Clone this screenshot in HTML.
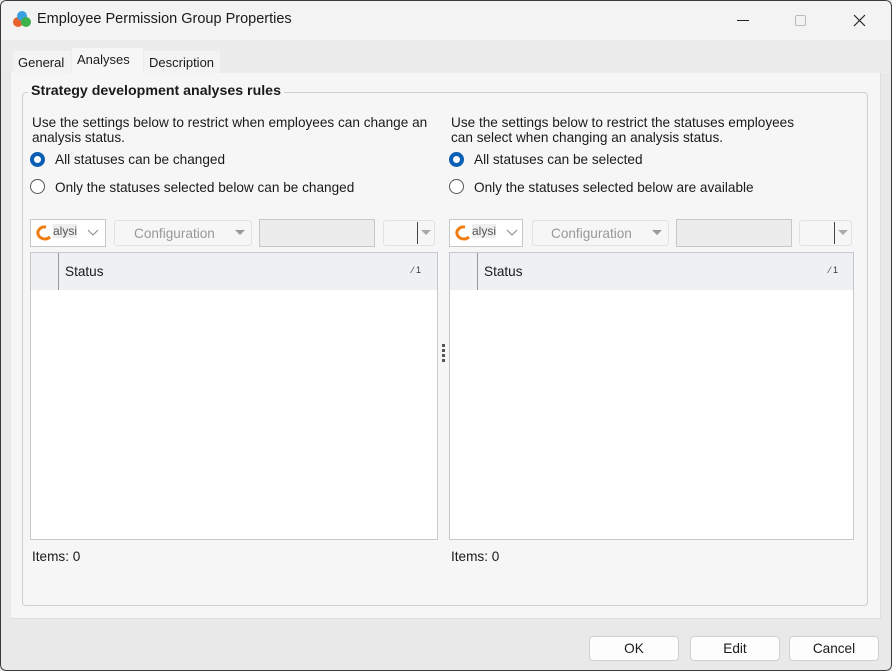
<!DOCTYPE html>
<html><head><meta charset="utf-8"><style>
*{box-sizing:border-box;margin:0;padding:0}
body{width:892px;height:671px;overflow:hidden;font-family:"Liberation Sans",sans-serif;font-size:13.6px;color:#1a1a1a;background:#e9e9e9;position:relative}
.a{position:absolute}
.win{left:0;top:0;width:892px;height:671px;border-radius:6px;background:#e9e9e9;overflow:hidden}
.frame{left:0;top:0;width:892px;height:671px;border:1px solid #3a3a3a;border-radius:6px;z-index:9}
.title{left:0;top:0;width:892px;height:40px;background:#f3f3f3}
.strip{left:0;top:40px;width:892px;height:33px;background:#ececec}
.page{left:11px;top:73px;width:870px;height:546px;background:#f6f6f6;border-right:1px solid #ddd;border-bottom:1px solid #ddd}
.tab{top:51px;height:22px;background:#f3f3f3;padding:4px 5px;font-size:13px}
.group{left:22px;top:92px;width:846px;height:514px;border:1px solid #cfcfcf;border-radius:4px}
.legend{left:28px;top:83px;background:#f6f6f6;font-weight:bold;padding:0 3px;font-size:14.2px}
.radio{width:15px;height:15px;border-radius:50%;border:1px solid #555;background:#fff}
.radio.on{border:4px solid #0a5fb4;background:#fff}
.grid{border:1px solid #c6c8cc;background:#fff}
.hdr{left:0;top:0;right:0;height:37px;background:#eef0f3}
.btn{top:636px;height:25px;background:#fdfdfd;border:1px solid #d0d0d0;border-radius:4px;text-align:center;line-height:23px}
.dd{height:26px;border:1px solid #e2e2e2;border-radius:3px;background:#f6f6f6}
</style></head><body>
<div class="a win">
<div class="a title"></div>
<svg class="a" style="left:12px;top:10px" width="20" height="18" viewBox="0 0 20 18"><circle cx="6" cy="12" r="5" fill="#e8632c"/><circle cx="10" cy="6" r="5" fill="#3aa0e0"/><circle cx="14" cy="12" r="5" fill="#3cb34a"/></svg>
<div class="a" style="left:37px;top:11px;font-size:14.5px">Employee Permission Group Properties</div>
<div class="a" style="left:737px;top:20px;width:12px;height:1px;background:#222"></div>
<div class="a" style="left:795px;top:15px;width:11px;height:11px;border:1px solid #bbb;border-radius:2px"></div>
<svg class="a" style="left:853px;top:14px" width="13" height="13"><path d="M1 1L12 12M12 1L1 12" stroke="#222" stroke-width="1.2"/></svg>
<div class="a strip"></div>
<div class="a tab" style="left:13px;width:58px">General</div>
<div class="a tab" style="left:72px;top:48px;height:26px;width:71px;background:#f6f6f6;padding-top:4px">Analyses</div>
<div class="a tab" style="left:144px;width:76px">Description</div>
<div class="a page"></div>
<div class="a group"></div>
<div class="a legend">Strategy development analyses rules</div>

<div class="a" style="left:32px;top:115px;line-height:15px">Use the settings below to restrict when employees can change an<br>analysis status.</div>
<div class="a radio on" style="left:30px;top:152px"></div>
<div class="a" style="left:55px;top:152px">All statuses can be changed</div>
<div class="a radio" style="left:30px;top:179px"></div>
<div class="a" style="left:55px;top:180px">Only the statuses selected below can be changed</div>

<div class="a" style="left:451px;top:115px;line-height:15px">Use the settings below to restrict the statuses employees<br>can select when changing an analysis status.</div>
<div class="a radio on" style="left:449px;top:152px"></div>
<div class="a" style="left:474px;top:152px">All statuses can be selected</div>
<div class="a radio" style="left:449px;top:179px"></div>
<div class="a" style="left:474px;top:180px">Only the statuses selected below are available</div>

<div class="a" style="left:30px;top:219px;width:76px;height:28px;border:1px solid #c8c8c8;background:#fff"></div>
<svg class="a" style="left:34px;top:224px" width="20" height="18"><path d="M12 3A7 6 0 1 0 16 13" stroke="#f07d12" stroke-width="3" fill="none"/></svg>
<div class="a" style="left:53px;top:224px;color:#555;background:#eee;font-size:12px">alysi</div>
<svg class="a" style="left:87px;top:229px" width="12" height="8"><path d="M1 1L6 6L11 1" stroke="#888" fill="none"/></svg>
<div class="a dd" style="left:114px;top:220px;width:138px"></div>
<div class="a" style="left:134px;top:226px;color:#999">Configuration</div>
<svg class="a" style="left:235px;top:230px" width="10" height="6"><path d="M0 0H10L5 5Z" fill="#999"/></svg>
<div class="a" style="left:259px;top:219px;width:116px;height:28px;border:1px solid #c8c8c8;background:#ececec"></div>
<div class="a dd" style="left:383px;top:220px;width:52px"></div>
<div class="a" style="left:417px;top:222px;width:1px;height:22px;background:#444"></div>
<svg class="a" style="left:421px;top:230px" width="10" height="6"><path d="M0 0H10L5 5Z" fill="#aaa"/></svg>

<div class="a" style="left:449px;top:219px;width:74px;height:28px;border:1px solid #c8c8c8;background:#fff"></div>
<svg class="a" style="left:453px;top:224px" width="20" height="18"><path d="M12 3A7 6 0 1 0 16 13" stroke="#f07d12" stroke-width="3" fill="none"/></svg>
<div class="a" style="left:472px;top:224px;color:#555;background:#eee;font-size:12px">alysi</div>
<svg class="a" style="left:506px;top:229px" width="12" height="8"><path d="M1 1L6 6L11 1" stroke="#888" fill="none"/></svg>
<div class="a dd" style="left:532px;top:220px;width:137px"></div>
<div class="a" style="left:551px;top:226px;color:#999">Configuration</div>
<svg class="a" style="left:652px;top:230px" width="10" height="6"><path d="M0 0H10L5 5Z" fill="#999"/></svg>
<div class="a" style="left:676px;top:219px;width:116px;height:28px;border:1px solid #c8c8c8;background:#ececec"></div>
<div class="a dd" style="left:799px;top:220px;width:53px"></div>
<div class="a" style="left:834px;top:222px;width:1px;height:22px;background:#444"></div>
<svg class="a" style="left:838px;top:230px" width="10" height="6"><path d="M0 0H10L5 5Z" fill="#aaa"/></svg>

<div class="a grid" style="left:30px;top:252px;width:408px;height:288px">
 <div class="a hdr"></div>
 <div class="a" style="left:27px;top:0;width:1px;height:37px;background:#9a9a9a"></div>
 <div class="a" style="left:34px;top:11px">Status</div>
 <div class="a" style="left:381px;top:12px;font-size:9px;color:#333">⁄ 1</div>
</div>
<div class="a grid" style="left:449px;top:252px;width:405px;height:288px">
 <div class="a hdr"></div>
 <div class="a" style="left:27px;top:0;width:1px;height:37px;background:#9a9a9a"></div>
 <div class="a" style="left:34px;top:11px">Status</div>
 <div class="a" style="left:379px;top:12px;font-size:9px;color:#333">⁄ 1</div>
</div>
<svg class="a" style="left:442px;top:344px" width="4" height="20"><rect y="0" width="3" height="3" fill="#555"/><rect y="5" width="3" height="3" fill="#555"/><rect y="10" width="3" height="3" fill="#555"/><rect y="15" width="3" height="3" fill="#555"/></svg>

<div class="a" style="left:32px;top:549px">Items: 0</div>
<div class="a" style="left:451px;top:549px">Items: 0</div>

<div class="a btn" style="left:589px;width:90px">OK</div>
<div class="a btn" style="left:690px;width:90px">Edit</div>
<div class="a btn" style="left:789px;width:90px">Cancel</div>
<div class="a frame"></div>
</div>
</body></html>
